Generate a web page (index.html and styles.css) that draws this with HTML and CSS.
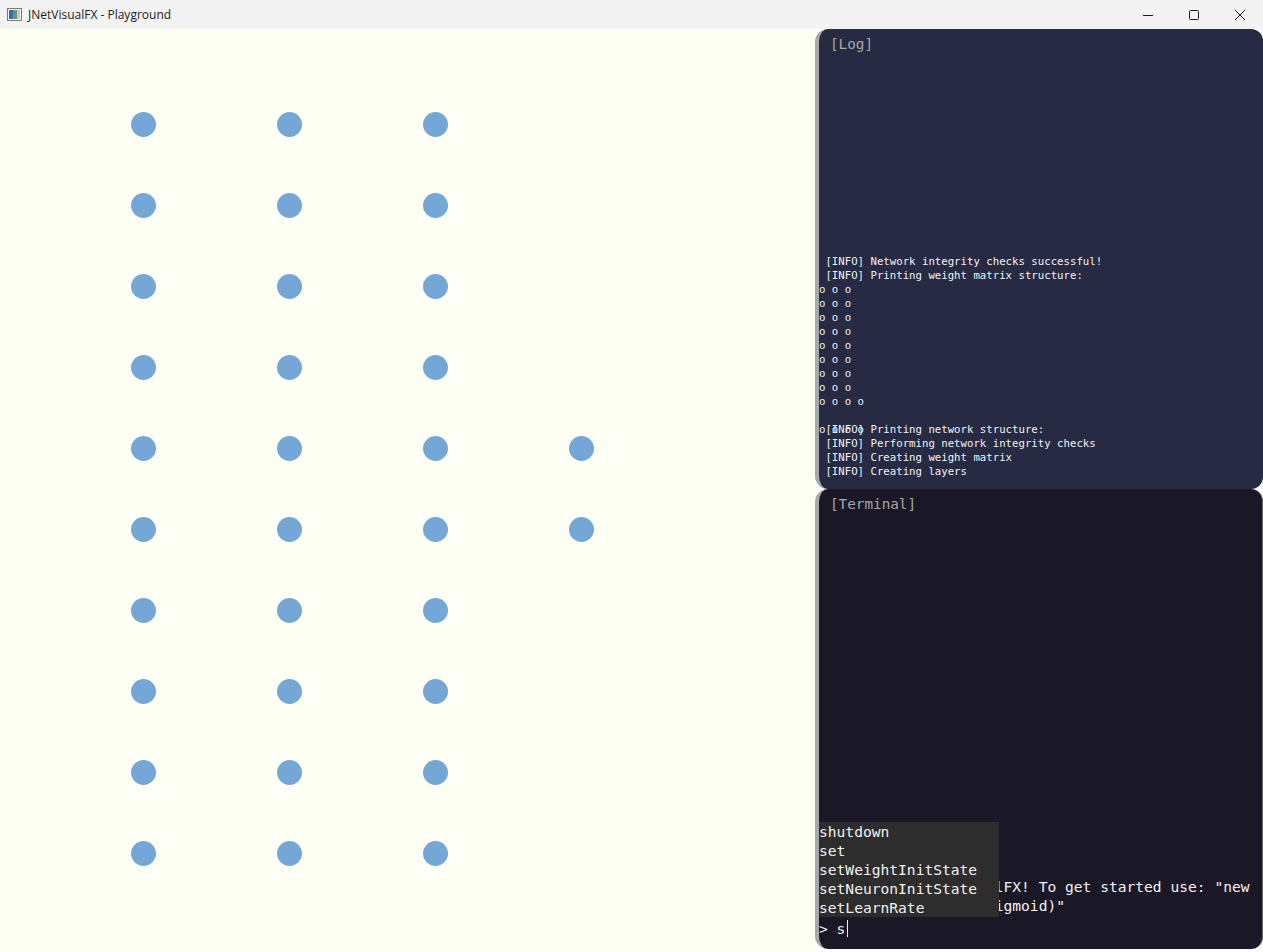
FILE: index.html
```html
<!DOCTYPE html>
<html>
<head>
<meta charset="utf-8">
<title>JNetVisualFX - Playground</title>
<link rel="stylesheet" href="styles.css">
</head>
<body>
<div class="window">
  <div class="titlebar">
    <svg class="app-icon" width="15" height="13" viewBox="0 0 15 13">
      <rect x="0.5" y="0.5" width="14" height="12" fill="#f4f4f4" stroke="#7a7a7a"/>
      <rect x="2" y="2" width="4" height="9" fill="#3b6ea8"/>
      <rect x="6" y="2" width="4" height="9" fill="#5f9a7a"/>
      <rect x="10" y="2" width="3" height="9" fill="#c8c8c8"/>
    </svg>
    <span class="title">JNetVisualFX - Playground</span>
    <div class="controls">
      <div class="ctl"><svg width="12" height="12" viewBox="0 0 12 12"><path d="M1 6.5h10" stroke="#1b1b1b" stroke-width="1"/></svg></div>
      <div class="ctl"><svg width="12" height="12" viewBox="0 0 12 12"><rect x="1.5" y="1.5" width="9" height="9" rx="1" fill="none" stroke="#1b1b1b" stroke-width="1"/></svg></div>
      <div class="ctl"><svg width="12" height="12" viewBox="0 0 12 12"><path d="M1 1L11 11M11 1L1 11" stroke="#1b1b1b" stroke-width="1"/></svg></div>
    </div>
  </div>
  <div class="main">
    <div class="canvas">
      <div class="layer">
        <span class="dot"></span><span class="dot"></span><span class="dot"></span><span class="dot"></span><span class="dot"></span>
        <span class="dot"></span><span class="dot"></span><span class="dot"></span><span class="dot"></span><span class="dot"></span>
      </div>
      <div class="layer">
        <span class="dot"></span><span class="dot"></span><span class="dot"></span><span class="dot"></span><span class="dot"></span>
        <span class="dot"></span><span class="dot"></span><span class="dot"></span><span class="dot"></span><span class="dot"></span>
      </div>
      <div class="layer">
        <span class="dot"></span><span class="dot"></span><span class="dot"></span><span class="dot"></span><span class="dot"></span>
        <span class="dot"></span><span class="dot"></span><span class="dot"></span><span class="dot"></span><span class="dot"></span>
      </div>
      <div class="layer">
        <span class="dot"></span><span class="dot"></span>
      </div>
    </div>
    <div class="side">
      <div class="panel log">
        <div class="panel-title">[Log]</div>
        <div class="log-lines">
          <div class="line"> [INFO] Network integrity checks successful!</div>
          <div class="line"> [INFO] Printing weight matrix structure:</div>
          <div class="line">o o o</div>
          <div class="line">o o o</div>
          <div class="line">o o o</div>
          <div class="line">o o o</div>
          <div class="line">o o o</div>
          <div class="line">o o o</div>
          <div class="line">o o o</div>
          <div class="line">o o o</div>
          <div class="line">o o o o</div>
          <div class="line"> </div>
          <div class="line overlap">o o o o<span class="over"> [INFO] Printing network structure:</span></div>
          <div class="line"> [INFO] Performing network integrity checks</div>
          <div class="line"> [INFO] Creating weight matrix</div>
          <div class="line"> [INFO] Creating layers</div>
        </div>
        <span class="splitter"></span>
      </div>
      <div class="panel terminal">
        <div class="panel-title">[Terminal]</div>
        <div class="term-body">
          <div class="tline">Welcome to JNetVisualFX! To get started use: "new</div>
          <div class="tline">network(3,10,10,2, sigmoid)"</div>
          <div class="prompt"><span class="ptext">&gt; s</span><span class="caret"></span><div class="suggest"><div class="sitem">shutdown</div><div class="sitem">set</div><div class="sitem">setWeightInitState</div><div class="sitem">setNeuronInitState</div><div class="sitem">setLearnRate</div></div></div>
        </div>
      </div>
    </div>
  </div>
</div>
</body>
</html>
```
FILE: styles.css
```css
html, body {
  margin: 0;
  padding: 0;
}
body {
  width: 1263px;
  height: 952px;
  overflow: hidden;
  background: #fdfff4;
  font-family: "Noto Sans", "Open Sans", sans-serif;
}
.window {
  display: flex;
  flex-direction: column;
  width: 1263px;
  height: 952px;
}
.titlebar {
  height: 29px;
  flex: none;
  background: #f3f3f3;
  display: flex;
  align-items: center;
  color: #1a1a1a;
}
.app-icon {
  margin-left: 7px;
  margin-right: 6px;
}
.title {
  font-size: 12px;
  font-family: "Open Sans", "Noto Sans", sans-serif;
  line-height: 16px;
}
.controls {
  margin-left: auto;
  display: flex;
  height: 29px;
}
.ctl {
  width: 46px;
  height: 29px;
  display: flex;
  align-items: center;
  justify-content: center;
}
.main {
  flex: 1;
  display: flex;
  min-height: 0;
}
.canvas {
  width: 815px;
  flex: none;
  background: #fdfff4;
  display: flex;
  align-items: center;
  gap: 121px;
  padding-left: 131px;
  box-sizing: border-box;
  height: 920px;
  padding-bottom: 1px;
}
.layer {
  display: flex;
  flex-direction: column;
  gap: 56px;
}
.dot {
  display: block;
  width: 25px;
  height: 25px;
  border-radius: 50%;
  background: #75a7d6;
}
.side {
  width: 448px;
  flex: none;
  display: flex;
  flex-direction: column;
  background: #ffffff;
}
.panel {
  box-sizing: border-box;
  border-left: 4px solid #a8a8a8;
  border-radius: 13px 12px 12px 13px;
  position: relative;
  display: flex;
  flex-direction: column;
}
.log {
  height: 460px;
  background: #262a42;
}
.terminal {
  height: 460px;
  background: #1a1727;
  border-right: 1px solid #6a6a6a;
}
.panel-title {
  font-family: "DejaVu Sans Mono", monospace;
  font-size: 14.3px;
  color: #a7a7a7;
  padding-left: 11px;
  line-height: 18px;
  padding-top: 6px;
}
.log-lines {
  margin-top: auto;
  padding-bottom: 10px;
  font-family: "DejaVu Sans Mono", monospace;
  font-size: 10.7px;
  line-height: 14px;
  color: #f2f2f2;
}
.line {
  white-space: pre;
  height: 14px;
}
.overlap {
  position: relative;
}
.over {
  position: absolute;
  left: 0;
  top: 0;
}
.splitter {
  position: absolute;
  right: 0;
  bottom: -6px;
  width: 0;
  height: 0;
  border-top: 6px solid transparent;
  border-bottom: 6px solid transparent;
  border-right: 5px solid #ffffff;
  z-index: 2;
}
.term-body {
  margin-top: auto;
  padding-bottom: 11px;
  font-family: "DejaVu Sans Mono", monospace;
  font-size: 14.6px;
  color: #f2f2f2;
}
.tline {
  white-space: pre;
  line-height: 19px;
  height: 19px;
}
.prompt {
  position: relative;
  margin-top: 4px;
  line-height: 19px;
  height: 19px;
}
.ptext {
  white-space: pre;
}
.caret {
  display: inline-block;
  width: 1px;
  height: 17px;
  background: #f2f2f2;
  vertical-align: -3px;
  margin-left: 2px;
}
.suggest {
  position: absolute;
  left: 0;
  bottom: 21px;
  width: 180px;
  background: #2d2d2d;
}
.sitem {
  line-height: 19px;
  height: 19px;
  white-space: pre;
}
```
